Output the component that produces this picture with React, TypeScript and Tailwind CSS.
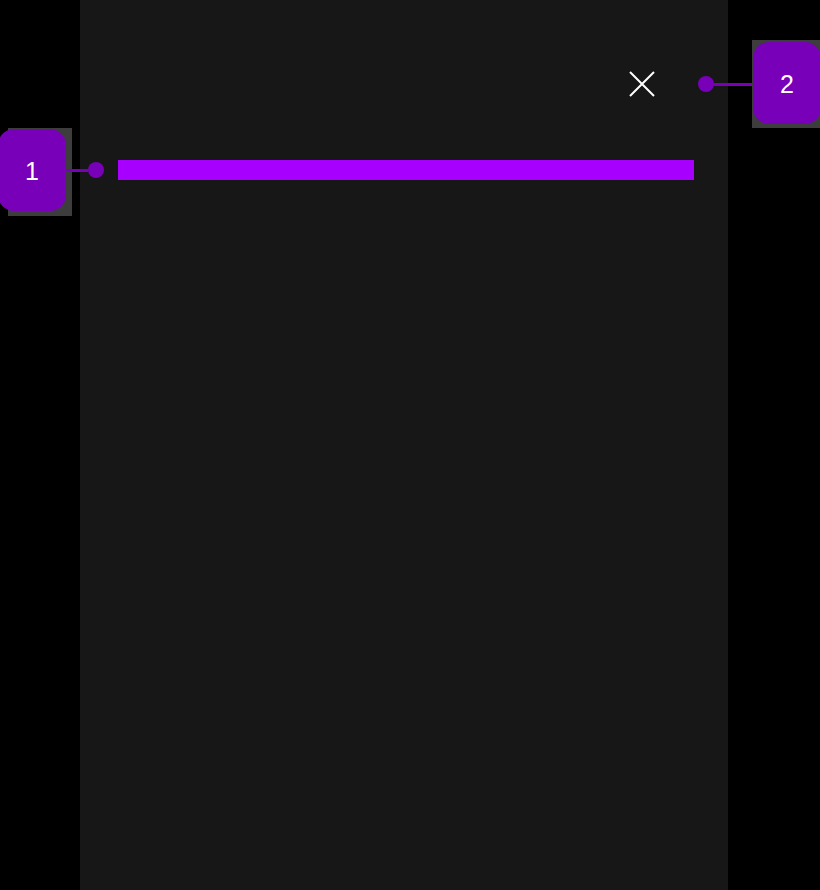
import React from 'react';

const font = { fontFamily: '"Liberation Sans", Arial, sans-serif' };

const App = () => {
  return (
    <div className="relative h-[890px] w-[820px] overflow-hidden bg-black">
      <div className="ml-[80px] h-[890px] w-[648px] bg-[#171717] pt-[71px] pl-[38px] pr-[34px]">
        <div className="flex justify-end pr-[39px]">
          <button className="h-[26px] w-[26px]" aria-label="Close">
            <svg width="26" height="26" viewBox="0 0 26 26" fill="none" stroke="white" strokeWidth="2">
              <path d="M1 1 25 25M25 1 1 25" />
            </svg>
          </button>
        </div>
        <div className="mt-[63px] h-[20px] w-[576px] bg-[#a800ff]" />
      </div>

      {/* callout 1: badge, leader line, dot */}
      <div className="absolute left-[8px] top-[128px] flex items-start">
        <div className="h-[88px] w-[64px] bg-[#3d3d3d]">
          <div
            className="-ml-[10px] mt-[1px] flex h-[82px] w-[68px] items-center justify-center rounded-[16px] bg-[#7800b8] pt-[3px] text-[25px] text-white"
            style={font}
          >
            1
          </div>
        </div>
        <div className="-ml-[6px] mt-[41px] h-[3px] w-[22px] bg-[#7800b8]" />
        <div className="mt-[34px] h-[16px] w-[16px] rounded-full bg-[#7800b8]" />
      </div>

      {/* callout 2: dot, leader line, badge */}
      <div className="absolute left-[698px] top-[40px] flex items-center">
        <div className="h-[16px] w-[16px] rounded-full bg-[#7800b8]" />
        <div className="h-[3px] w-[38px] bg-[#7800b8]" />
        <div className="h-[88px] w-[68px] bg-[#3d3d3d]">
          <div
            className="ml-[1px] mt-[2px] flex h-[82px] w-[68px] items-center justify-center rounded-[16px] bg-[#7800b8] pt-[3px] text-[25px] text-white"
            style={font}
          >
            2
          </div>
        </div>
      </div>
    </div>
  );
};

export default App;
